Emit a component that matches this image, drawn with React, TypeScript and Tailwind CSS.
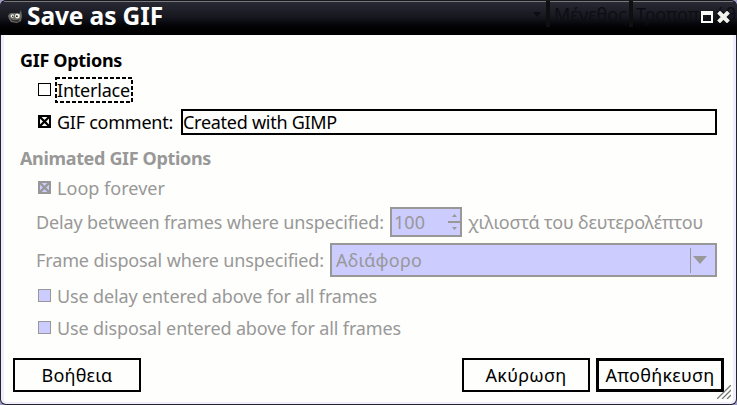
import { useLayoutEffect, useRef, type ReactNode } from "react";
import clsx from "clsx";

/** Single-line label whose tracking is tuned so that it fills the given width. */
function Label({ text, width, className }: { text: string; width: number; className?: string }) {
  const ref = useRef<HTMLSpanElement>(null);
  useLayoutEffect(() => {
    const el = ref.current;
    if (!el) return;
    el.style.letterSpacing = "0px";
    const natural = el.getBoundingClientRect().width;
    el.style.letterSpacing = `${(width - natural) / text.length}px`;
  }, [text, width]);
  return (
    <span ref={ref} className={clsx("inline-block shrink-0 whitespace-pre", className)}>
      {text}
    </span>
  );
}

function Check({ checked, disabled }: { checked?: boolean; disabled?: boolean }) {
  const ink = disabled ? "#989898" : "#000";
  return (
    <svg width="13" height="13" viewBox="0 0 13 13" className="-mt-px shrink-0">
      <rect x=".5" y=".5" width="12" height="12" fill={disabled ? "#ccccff" : "#fefefc"} stroke={ink} />
      {checked && (
        <>
          <rect x="1" y="1" width="11" height="11" fill="none" stroke={ink} strokeWidth="2" />
          <path d="M2 2L11 11M11 2L2 11" stroke={ink} strokeWidth="2.4" />
        </>
      )}
    </svg>
  );
}

function Button({ children, primary }: { children: ReactNode; primary?: boolean }) {
  return (
    <button
      className={clsx(
        "flex h-[34px] w-32 items-center justify-center border-black",
        primary ? "border-[3px]" : "border-2"
      )}
    >
      {children}
    </button>
  );
}

function TitleBar() {
  return (
    <header className="relative flex h-[35px] shrink-0 items-center overflow-hidden rounded-t-md border-t border-[#17171c] bg-linear-to-b from-[#292a35] via-[#15161d] to-black pl-2 text-white">
      <div className="absolute inset-x-1 top-0 h-px bg-[#77777c]" />
      <div className="absolute top-0 left-[533px] flex h-[26px] w-[204px] items-center text-lg text-[#0d0e13]">
        <svg width="8" height="5" viewBox="0 0 8 5" className="mr-[5px] shrink-0">
          <path d="M0 0H8L4 5Z" fill="currentColor" />
        </svg>
        <i className="mr-1 h-full w-1 shrink-0 bg-[#0e1010]" />
        <Label text="Μέγεθος" width={73} />
        <i className="mr-[3px] ml-[2px] h-full w-1 shrink-0 bg-[#0e1010]" />
        <Label text="Τροποποιήθ" width={100} />
      </div>
      <svg width="14" height="13" viewBox="0 0 14 13" className="mr-[5px] -mt-1 shrink-0">
        <path d="M1 4L3 3L7 3L11 4L13 0L14 6L13 11L9 13L3 12L1 9L0 6Z" fill="#6b6963" />
        <path d="M2 8L5 10L9 10L12 9L10 12L4 11Z" fill="#34312d" />
        <circle cx="4.4" cy="6" r="1.8" fill="#f2f2ee" />
        <circle cx="9.4" cy="6" r="2.4" fill="#f2f2ee" />
        <circle cx="4.8" cy="6.2" r=".8" fill="#111" />
        <circle cx="8.9" cy="6.2" r=".9" fill="#111" />
      </svg>
      <Label text="Save as GIF" width={136} className="-mt-[3px] text-[24.5px] leading-none font-bold" />
      <div className="relative mr-[7px] ml-auto flex items-center gap-[4px] pb-[2px]">
        <svg width="12" height="12" viewBox="0 0 12 12">
          <path d="M0 0H12V12H0ZM2 4V10H10V4Z" fill="#fdfdfa" fillRule="evenodd" />
        </svg>
        <svg width="13" height="12" viewBox="0 0 13 12">
          <path d="M3 2.5L10 9.5M10 2.5L3 9.5" stroke="#f2f2ed" strokeWidth="4" strokeLinecap="square" />
        </svg>
      </div>
    </header>
  );
}

export default function App() {
  return (
    <div className="h-[405px] w-[737px] overflow-hidden bg-[#9c9cc4] font-['Noto_Sans',sans-serif] text-[18px] leading-none text-black">
      <div className="flex h-full flex-col overflow-hidden rounded-md bg-[#24242f]">
        <TitleBar />
        <main className="relative mr-px mb-px ml-px flex flex-1 flex-col rounded-b-[5px] border-r-3 border-b-2 border-l-3 border-[#f1edfc] bg-[#fefefc] pt-[10px]">
          <div className="flex h-[30px] items-center pl-4">
            <Label text="GIF Options" width={102} className="font-bold" />
          </div>
          <div className="flex h-[30px] items-center pl-[34px]">
            <Check />
            <div className="relative ml-1 flex h-[26px] w-[78px] items-center pl-[2px]">
              <svg className="absolute inset-0" width="78" height="26" viewBox="0 0 78 26">
                <rect x="1" y="1" width="76" height="24" fill="none" stroke="#000" strokeWidth="2" strokeDasharray="4 2" />
              </svg>
              <Label text="Interlace" width={73} />
            </div>
          </div>
          <div className="flex h-[34px] items-center pl-[34px]">
            <Check checked />
            <Label text="GIF comment:" width={116} className="ml-1.5" />
            <div className="ml-[8px] flex h-[26px] w-[536px] items-center border-2 border-black">
              <Label text="Created with GIMP" width={154} />
            </div>
          </div>
          <div className="flex h-[38px] items-center pl-4 text-[#989898]">
            <Label text="Animated GIF Options" width={191} className="font-bold" />
          </div>
          <div className="flex h-[22px] items-center pl-[34px] text-[#989898]">
            <Check checked disabled />
            <Label text="Loop forever" width={108} className="ml-1.5" />
          </div>
          <div className="mt-2 flex h-[30px] items-center pl-8 text-[#989898]">
            <Label text="Delay between frames where unspecified:" width={348} />
            <div className="ml-[6px] flex h-[30px] w-[72px] items-center justify-between border-2 border-[#989898] bg-[#ccccff] pl-[2px]">
              <Label text="100" width={31} />
              <svg width="12" height="16" viewBox="0 0 12 16" fill="currentColor">
                <path d="M4 3L6.5 0L9 3ZM0 7H12V9H0ZM4 13H9L6.5 16Z" />
              </svg>
            </div>
            <Label text="χιλιοστά του δευτερολέπτου" width={235} className="ml-1.5" />
          </div>
          <div className="mt-1.5 flex h-[34px] items-center pl-8 text-[#989898]">
            <Label text="Frame disposal where unspecified:" width={288} />
            <div className="ml-[6px] flex h-[34px] w-[387px] items-center border-2 border-[#989898] bg-[#ccccff] pl-1">
              <Label text="Αδιάφορο" width={86} />
              <i className="mr-[2px] ml-auto h-[25px] w-px bg-[#989898]" />
              <svg width="14" height="8" viewBox="0 0 14 8" className="mr-2">
                <path d="M0 0H14L7 8Z" fill="currentColor" />
              </svg>
            </div>
          </div>
          <div className="mt-1 flex h-[30px] items-center pl-[34px] text-[#989898]">
            <Check disabled />
            <Label text="Use delay entered above for all frames" width={320} className="ml-1.5" />
          </div>
          <div className="mt-[2px] flex h-[30px] items-center pl-[34px] text-[#989898]">
            <Check disabled />
            <Label text="Use disposal entered above for all frames" width={344} className="ml-1.5" />
          </div>
          <div className="mt-[15px] flex gap-1.5 pr-[9px] pl-[9px]">
            <Button>
              <Label text="Βοήθεια" width={71} />
            </Button>
            <div className="flex-1" />
            <Button>
              <Label text="Ακύρωση" width={81} />
            </Button>
            <Button primary>
              <Label text="Αποθήκευση" width={109} />
            </Button>
          </div>
          <svg className="absolute right-[2px] bottom-[3px]" width="14" height="14" viewBox="0 0 14 14">
            <path d="M0 14L14 0M5 14L14 5M10 14L14 10" stroke="#777" strokeWidth="1.3" />
          </svg>
        </main>
      </div>
    </div>
  );
}
